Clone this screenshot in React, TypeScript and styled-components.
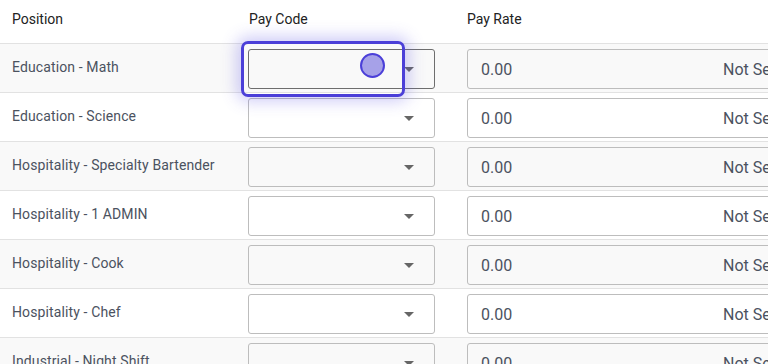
import styled, { createGlobalStyle } from "styled-components";

const Global = createGlobalStyle`
  html, body {
    margin: 0;
    padding: 0;
    background: #ffffff;
    overflow: hidden;
    font-family: Roboto, "Noto Sans", sans-serif;
  }
`;

const Page = styled.div`
  position: relative;
  width: 768px;
  height: 364px;
  overflow: hidden;
`;

const Table = styled.div`
  width: 820px;
`;

const HeaderRow = styled.div`
  display: grid;
  grid-template-columns: 236px 219px 340px;
  height: 43px;
  align-items: center;
  padding-left: 12px;
  font-size: 14px;
  color: #222222;
`;

const HeadCell = styled.div<{ $indent?: number }>`
  padding-left: ${(p) => p.$indent ?? 0}px;
  margin-top: -6px;
`;

const Row = styled.div<{ $striped: boolean }>`
  display: grid;
  grid-template-columns: 236px 219px 340px;
  height: 48px;
  padding-left: 12px;
  border-top: 1px solid #e2e2e2;
  background: ${(p) => (p.$striped ? "#f9f9f9" : "#ffffff")};
`;

const Label = styled.div`
  align-self: center;
  margin-top: -2px;
  font-size: 14px;
  letter-spacing: 0.12px;
  color: #4b5260;
  white-space: nowrap;
`;

const ControlCell = styled.div`
  padding-top: 5px;
`;

const Select = styled.div<{ $active?: boolean }>`
  position: relative;
  box-sizing: border-box;
  width: 187px;
  height: 40px;
  border: 1px solid ${(p) => (p.$active ? "#6e6e6e" : "#bdbdbd")};
  border-radius: 3px;
  background: transparent;
`;

const Caret = styled.span`
  position: absolute;
  right: 20px;
  top: 17px;
  width: 0;
  height: 0;
  border-left: 5px solid transparent;
  border-right: 5px solid transparent;
  border-top: 5px solid #666666;
`;

const RateInput = styled.div`
  box-sizing: border-box;
  display: flex;
  align-items: center;
  justify-content: space-between;
  width: 322px;
  height: 40px;
  padding: 0 12px 0 13px;
  border: 1px solid #bdbdbd;
  border-radius: 3px;
  font-size: 16px;
  color: #4b5260;
`;

const FocusRing = styled.div`
  position: absolute;
  left: 241px;
  top: 41px;
  box-sizing: border-box;
  width: 164px;
  height: 56px;
  border: 3px solid #4b3fd8;
  border-radius: 7px;
  box-shadow: 0 0 16px 4px rgba(90, 80, 230, 0.3);
  pointer-events: none;
`;

const Dot = styled.div`
  position: absolute;
  left: 360px;
  top: 53px;
  box-sizing: border-box;
  width: 25px;
  height: 25px;
  border-radius: 50%;
  border: 2px solid #4b3fd8;
  background: #a6a1e8;
`;

const positions = [
  "Education - Math",
  "Education - Science",
  "Hospitality - Specialty Bartender",
  "Hospitality - 1 ADMIN",
  "Hospitality - Cook",
  "Hospitality - Chef",
  "Industrial - Night Shift",
];

export default function App() {
  return (
    <Page>
      <Global />
      <Table>
        <HeaderRow>
          <HeadCell>Position</HeadCell>
          <HeadCell $indent={1}>Pay Code</HeadCell>
          <HeadCell>Pay Rate</HeadCell>
        </HeaderRow>
        {positions.map((name, i) => (
          <Row key={name} $striped={i % 2 === 0}>
            <Label>{name}</Label>
            <ControlCell>
              <Select $active={i === 0}>
                <Caret />
              </Select>
            </ControlCell>
            <ControlCell>
              <RateInput>
                <span>0.00</span>
                <span>Not Set</span>
              </RateInput>
            </ControlCell>
          </Row>
        ))}
      </Table>
      <FocusRing />
      <Dot />
    </Page>
  );
}
